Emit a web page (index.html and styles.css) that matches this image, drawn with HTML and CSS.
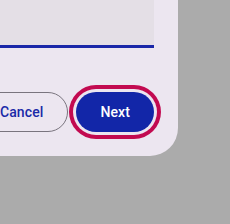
FILE: index.html
```html
<!DOCTYPE html>
<html>
<head>
<meta charset="utf-8">
<link rel="stylesheet" href="styles.css">
</head>
<body>
<div class="dialog">
  <div class="field"></div>
  <div class="actions">
    <button class="btn btn-outline">Cancel</button>
    <button class="btn btn-filled">Next</button>
  </div>
</div>
</body>
</html>
```
FILE: styles.css
```css
html, body {
  margin: 0;
  padding: 0;
  background: #ababab;
  width: 230px;
  height: 224px;
  overflow: hidden;
}
.dialog {
  box-sizing: border-box;
  width: 300px;
  margin-left: -122px;
  margin-top: -32px;
  padding: 24px;
  background: #ece6f0;
  border-radius: 0 0 28px 0;
  font-family: Roboto, "Liberation Sans", sans-serif;
}
.field {
  height: 53px;
  background: #e4dfe6;
  border-bottom: 3px solid #1a27a8;
}
.actions {
  margin-top: 44px;
  display: flex;
  justify-content: flex-end;
  gap: 8px;
}
.btn {
  height: 40px;
  padding: 0 24px;
  border-radius: 20px;
  font-family: Roboto, "Liberation Sans", sans-serif;
  font-size: 14px;
  font-weight: 500;
  letter-spacing: 0.1px;
  box-sizing: border-box;
}
.btn-outline {
  background: transparent;
  border: 1px solid #79747e;
  color: #1a2aa8;
}
.btn-filled {
  background: #1226a8;
  border: none;
  color: #ffffff;
  box-shadow: 0 0 0 3px #ece6f0, 0 0 0 7px #c20a50;
}
```
